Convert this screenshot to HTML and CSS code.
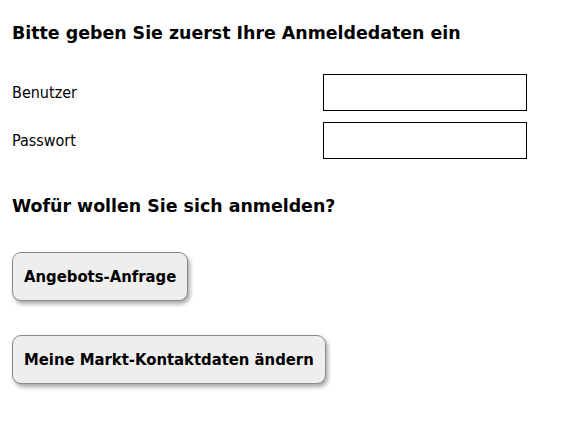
FILE: index.html
```html
<!DOCTYPE html>
<html>
<head>
    <title>Anmeldung</title>
    <link rel="stylesheet" href="styles.css">
</head>
<body>
    <div class="login">
        <h3>Bitte geben Sie zuerst Ihre Anmeldedaten ein</h3>

        <div class="field-row">
            <label for="user">Benutzer</label>
            <input type="text" id="user">
        </div>
        <div class="field-row">
            <label for="pass">Passwort</label>
            <input type="password" id="pass">
        </div>

        <h3 class="question">Wofür wollen Sie sich anmelden?</h3>

        <div class="actions">
            <button>Angebots-Anfrage</button>
            <button>Meine Markt-Kontaktdaten ändern</button>
        </div>
    </div>
</body>
</html>
```

FILE: styles.css
```css
body {
    margin: 0;
    padding: 23px 12px;
    background-color: #ffffff;
    color: #000000;
    font-family: 'DejaVu Sans', Verdana, sans-serif;
}

h3 {
    font-size: 17.4px;
    line-height: 20px;
    font-weight: bold;
    margin: 0 0 31px 0;
}

.field-row {
    display: flex;
    align-items: center;
    width: 515px;
    margin-bottom: 11px;
}

label {
    flex: 1;
    font-family: 'DejaVu Sans Condensed', Tahoma, sans-serif;
    font-size: 16px;
}

input {
    width: 204px;
    height: 37px;
    box-sizing: border-box;
    border: 1px solid #000000;
    padding: 2px 6px;
    font-size: 16px;
}

.question {
    margin-top: 37px;
    margin-bottom: 36px;
}

.actions {
    display: flex;
    flex-direction: column;
    align-items: flex-start;
    gap: 34px;
}

button {
    background-color: #eeeeee;
    border: 1px solid #8a8a8a;
    border-radius: 9px;
    box-shadow: 2px 3px 4px rgba(0, 0, 0, 0.35);
    padding: 0 11px;
    height: 49px;
    font-family: 'DejaVu Sans Condensed', Tahoma, sans-serif;
    font-size: 16.5px;
    font-weight: bold;
    color: #000000;
    cursor: pointer;
}
```
